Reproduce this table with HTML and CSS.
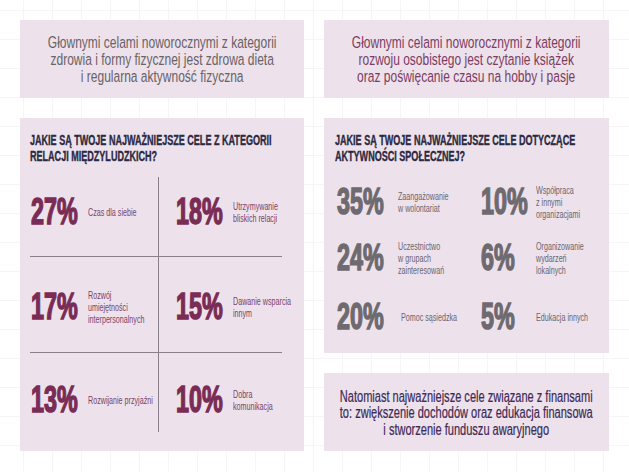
FILE: index.html
```html
<!DOCTYPE html>
<html lang="pl">
<head>
<meta charset="utf-8">
<title>Cele noworoczne</title>
<link rel="stylesheet" href="styles.css">
</head>
<body>
<div class="page">
  <div class="col">
    <div class="box intro">
      <span class="intro-text c-grey">Głownymi celami noworocznymi z kategorii<br>zdrowia i formy fizycznej jest zdrowa dieta<br>i regularna aktywność fizyczna</span>
    </div>
    <div class="box quiz">
      <h2 class="heading"><span>JAKIE SĄ TWOJE NAJWAŻNIEJSZE CELE Z KATEGORII<br>RELACJI MIĘDZYLUDZKICH?</span></h2>
      <div class="quad">
        <div class="cell left r1"><span class="num">27%</span><span class="lbl">Czas dla siebie</span></div>
        <div class="cell right r1"><span class="num">18%</span><span class="lbl">Utrzymywanie<br>bliskich relacji</span></div>
        <div class="cell left r2"><span class="num">17%</span><span class="lbl">Rozwój<br>umiejętności<br>interpersonalnych</span></div>
        <div class="cell right r2"><span class="num">15%</span><span class="lbl">Dawanie wsparcia<br>innym</span></div>
        <div class="cell left r3"><span class="num">13%</span><span class="lbl">Rozwijanie przyjaźni</span></div>
        <div class="cell right r3"><span class="num">10%</span><span class="lbl">Dobra<br>komunikacja</span></div>
      </div>
    </div>
  </div>
  <div class="col">
    <div class="box intro">
      <span class="intro-text c-plum">Głownymi celami noworocznymi z kategorii<br>rozwoju osobistego jest czytanie książek<br>oraz poświęcanie czasu na hobby i pasje</span>
    </div>
    <div class="box social">
      <h2 class="heading"><span>JAKIE SĄ TWOJE NAJWAŻNIEJSZE CELE DOTYCZĄCE<br>AKTYWNOŚCI SPOŁECZNEJ?</span></h2>
      <div class="stats">
        <div class="stat s1"><span class="num">35%</span><span class="lbl">Zaangażowanie<br>w wolontariat</span></div>
        <div class="stat s2"><span class="num">10%</span><span class="lbl">Współpraca<br>z innymi<br>organizacjami</span></div>
        <div class="stat s1"><span class="num">24%</span><span class="lbl">Uczestnictwo<br>w grupach<br>zainteresowań</span></div>
        <div class="stat s2"><span class="num">6%</span><span class="lbl">Organizowanie<br>wydarzeń<br>lokalnych</span></div>
        <div class="stat s1"><span class="num">20%</span><span class="lbl lbl-shift">Pomoc sąsiedzka</span></div>
        <div class="stat s2"><span class="num">5%</span><span class="lbl">Edukacja innych</span></div>
      </div>
    </div>
    <div class="box finance">
      <span class="finance-text">Natomiast najważniejsze cele związane z finansami<br>to: zwiększenie dochodów oraz edukacja finansowa<br>i stworzenie funduszu awaryjnego</span>
    </div>
  </div>
</div>
</body>
</html>
```

FILE: styles.css
```css
html, body {
  margin: 0;
  padding: 0;
}

body {
  width: 629px;
  height: 472px;
  overflow: hidden;
  font-family: "Liberation Sans", Arial, sans-serif;
  background-color: #ffffff;
  background-image:
    linear-gradient(to right, #f7f4f7 1px, transparent 1px),
    linear-gradient(to bottom, #f7f4f7 1px, transparent 1px);
  background-size: 29px 29px;
  background-position: 23px 10px;
}

.page {
  display: flex;
  gap: 20px;
  padding: 20px 20px 0 20px;
}

.col {
  display: flex;
  flex-direction: column;
  gap: 20px;
}

.col:first-child {
  width: 284px;
}

.col:last-child {
  width: 285px;
}

.box {
  background: #ede1eb;
  box-sizing: border-box;
  overflow: clip;
}

/* intro boxes */
.intro {
  height: 78px;
  display: flex;
  justify-content: center;
  align-items: center;
}

.intro-text {
  display: inline-block;
  white-space: nowrap;
  text-align: center;
  font-size: 16.3px;
  line-height: 17px;
  transform: scaleX(0.737);
  transform-origin: center center;
}

.c-grey {
  color: #696266;
}

.c-plum {
  color: #7b3c62;
}

/* headings */
.heading {
  margin: 0;
  font-size: 14px;
  line-height: 16px;
  font-weight: 700;
  color: #2b2942;
  -webkit-text-stroke: 0.35px #2b2942;
}

.heading span {
  display: inline-block;
  white-space: nowrap;
  transform: scaleX(0.646);
  transform-origin: left top;
}

/* quiz box */
.quiz {
  height: 333px;
  padding: 14px 10px 0 10px;
}

.quad {
  margin-top: 13px;
  display: grid;
  grid-template-columns: 129px 123px;
  grid-template-rows: 80px 96px 79px;
}

.cell {
  display: grid;
  grid-template-columns: 57px 1fr;
  align-items: center;
  box-sizing: border-box;
  min-width: 0;
}

.cell.left {
  border-right: 1px solid #8a808c;
  padding-left: 1px;
}

.cell.right {
  padding-left: 17px;
}

.cell.r1,
.cell.r2 {
  border-bottom: 1px solid #8a808c;
}

.cell.r1 {
  padding-bottom: 9px;
}

.cell.r2 {
  padding-top: 5px;
}

.cell.r3 {
  padding-top: 15px;
}

.num {
  display: inline-block;
  white-space: nowrap;
  font-size: 36.5px;
  line-height: 38px;
  font-weight: 700;
  transform: scaleX(0.64);
  transform-origin: left center;
}

.quiz .num {
  color: #7a2c55;
  -webkit-text-stroke: 1.5px #7a2c55;
}

.lbl {
  display: inline-block;
  white-space: nowrap;
  font-size: 11px;
  line-height: 12px;
  transform: scaleX(0.65);
  transform-origin: left center;
}

.quiz .lbl {
  color: #7a4468;
}

/* social box */
.social {
  height: 235px;
  padding: 14px 10px 0 11px;
}

.stats {
  margin-top: 10px;
  margin-left: 2px;
  display: grid;
  grid-template-columns: 144px 1fr;
  grid-template-rows: 56px 55px 63px;
}

.stat {
  display: grid;
  align-items: center;
  min-width: 0;
}

.stat.s1 {
  grid-template-columns: 61px 1fr;
}

.stat.s2 {
  grid-template-columns: 55px 1fr;
}

.social .num {
  color: #6e6a70;
  -webkit-text-stroke: 1.5px #6e6a70;
}

.social .lbl {
  color: #6a6670;
}

.lbl-shift {
  margin-left: 3px;
}

/* finance box */
.finance {
  height: 78px;
  display: flex;
  justify-content: center;
  align-items: center;
  padding-top: 3px;
}

.finance-text {
  display: inline-block;
  white-space: nowrap;
  text-align: center;
  font-size: 16px;
  line-height: 16.5px;
  color: #3d2a56;
  -webkit-text-stroke: 0.2px #3d2a56;
  transform: scaleX(0.69);
  transform-origin: center center;
}
```
